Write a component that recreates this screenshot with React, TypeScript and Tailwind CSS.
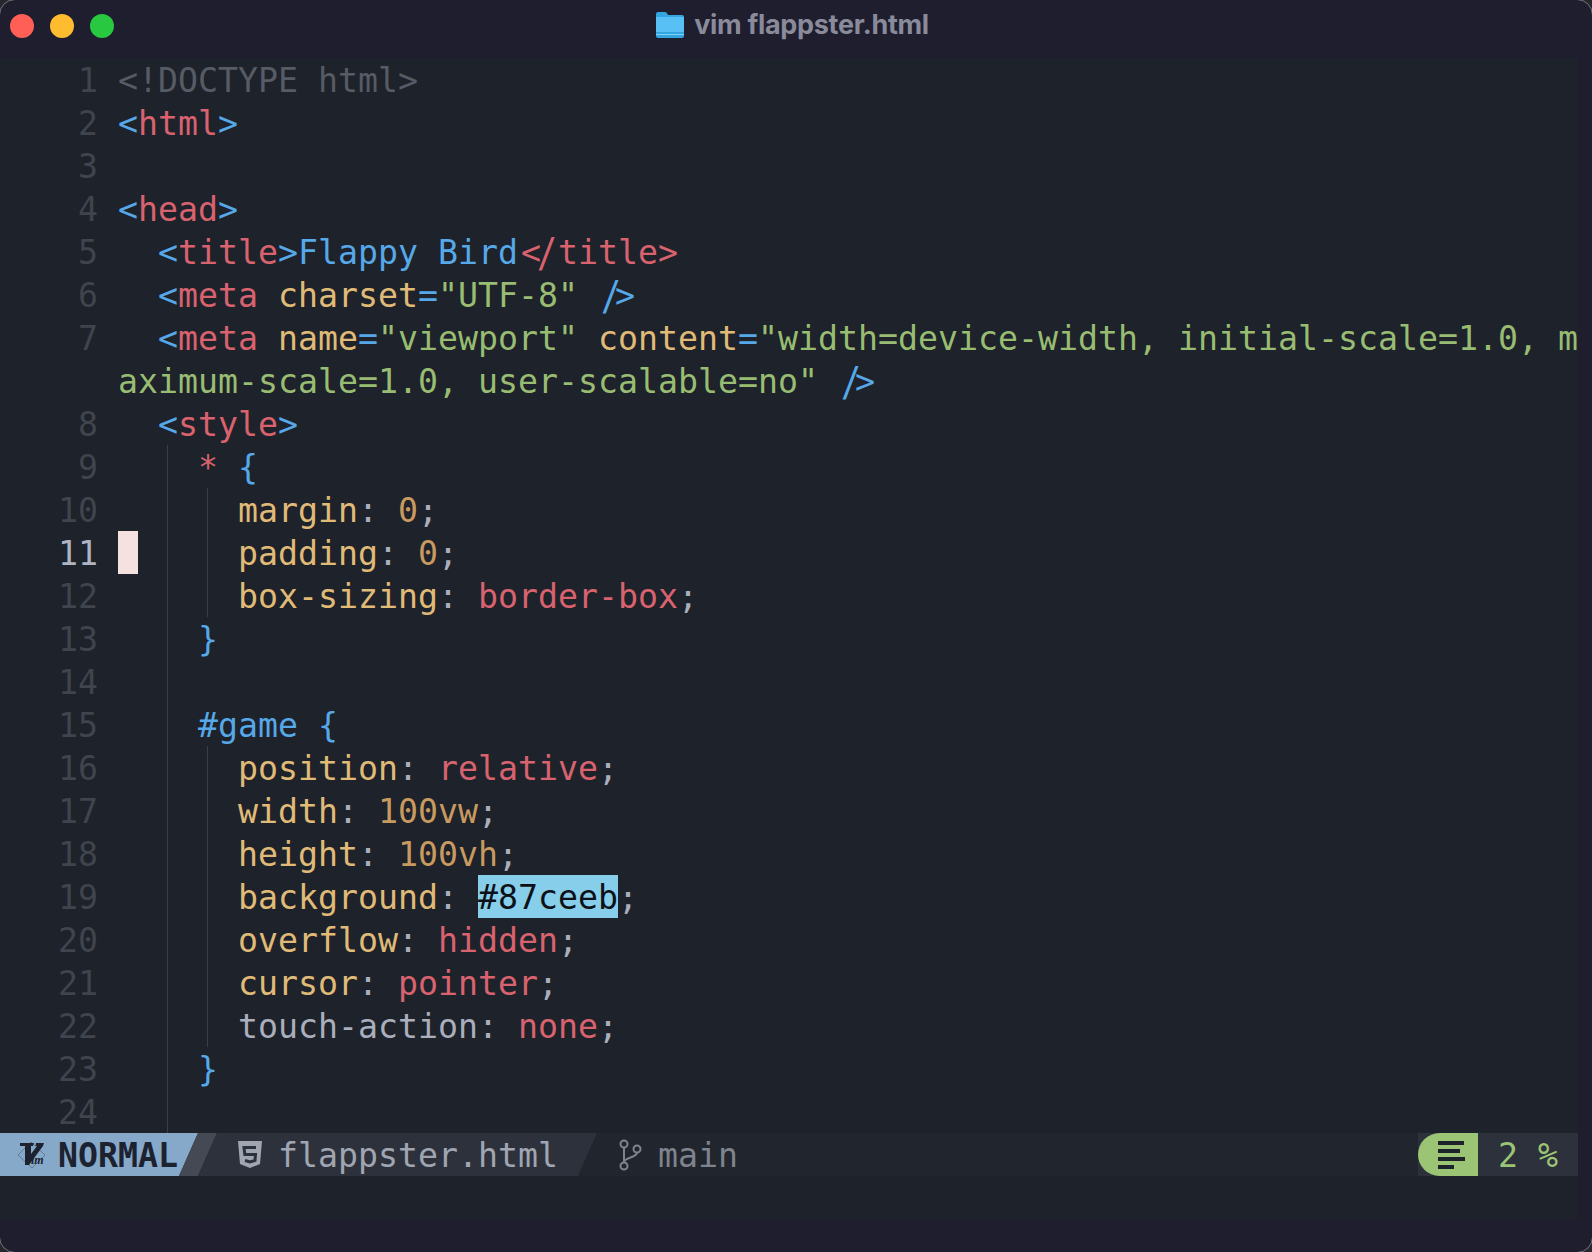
import React from "react";

const B = "text-[#56a8e8]";
const R = "text-[#d9626f]";
const G = "text-[#98bd72]";
const Y = "text-[#e0bb78]";
const O = "text-[#c99a60]";
const P = "text-[#a9afbc]";
const D = "text-[#565b65]";

type Tok = [string, string, string?];
type Row = { n?: number; t: Tok[]; g?: number[] };

const prop = (name: string, val: string, cls: string, nameCls = Y): Tok[] => [
  ["      ", P],
  [name, nameCls],
  [": ", P],
  [val, cls],
  [";", P],
];
const ltr = "inline-block translate-x-[3px]";
const slashL = "inline-block -translate-x-[1px] scale-y-125";
const slashR = "inline-block translate-x-[3px] scale-y-125";
const gtL = "inline-block -translate-x-[3px]";

const rows: Row[] = [
  { n: 1, t: [["<!DOCTYPE html>", D]] },
  { n: 2, t: [["<", B], ["html", R], [">", B]] },
  { n: 3, t: [] },
  { n: 4, t: [["<", B], ["head", R], [">", B]] },
  { n: 5, t: [["  ", P], ["<", B], ["title", R], [">", B], ["Flappy Bird", B], ["<", R, ltr], ["/", R, slashL], ["title", R], [">", R]] },
  { n: 6, t: [["  ", P], ["<", B], ["meta ", R], ["charset", Y], ["=", B], ['"UTF-8" ', G], ["/", B, slashR], [">", B, gtL]] },
  { n: 7, t: [["  ", P], ["<", B], ["meta ", R], ["name", Y], ["=", B], ['"viewport" ', G], ["content", Y], ["=", B], ['"width=device-width, initial-scale=1.0, m', G]] },
  { t: [['aximum-scale=1.0, user-scalable=no" ', G], ["/", B, slashR], [">", B, gtL]] },
  { n: 8, t: [["  ", P], ["<", B], ["style", R], [">", B]] },
  { n: 9, t: [["    ", P], ["* ", R], ["{", B]], g: [168] },
  { n: 10, t: [...prop("margin", "0", O)], g: [168, 208] },
  { n: 11, t: [...prop("padding", "0", O)], g: [168, 208] },
  { n: 12, t: [...prop("box-sizing", "border-box", R)], g: [168, 208] },
  { n: 13, t: [["    ", P], ["}", B]], g: [168] },
  { n: 14, t: [], g: [168] },
  { n: 15, t: [["    ", P], ["#game {", B]], g: [168] },
  { n: 16, t: [...prop("position", "relative", R)], g: [168, 208] },
  { n: 17, t: [...prop("width", "100vw", O)], g: [168, 208] },
  { n: 18, t: [...prop("height", "100vh", O)], g: [168, 208] },
  { n: 19, t: [["      ", P], ["background", Y], [": ", P], ["#87ceeb", "inline-block h-[43px] align-top bg-[#87ceeb] text-[#0d1117]"], [";", P]], g: [168, 208] },
  { n: 20, t: [...prop("overflow", "hidden", R)], g: [168, 208] },
  { n: 21, t: [...prop("cursor", "pointer", R)], g: [168, 208] },
  { n: 22, t: [...prop("touch-action", "none", R, P)], g: [168, 208] },
  { n: 23, t: [["    ", P], ["}", B]], g: [168] },
  { n: 24, t: [], g: [168] },
];

const mono = "font-['DejaVu_Sans_Mono',monospace] text-[33.22px] leading-[45px] whitespace-pre [font-variant-ligatures:none]";

function CodeRow({ row }: { row: Row }) {
  const current = row.n === 11;
  return (
    <div className="relative flex h-[43px]">
      <div className={`w-[98px] text-right ${current ? "text-[#aeb4c2]" : "text-[#3f444e]"}`}>{row.n ?? ""}</div>
      <div className="ml-[20px] flex-1">
        {current && <span className="absolute left-[118px] top-0 h-[43px] w-[20px] bg-[#f5e1df]" />}
        {row.t.map((tok, i) => (
          <span key={i} className={`${tok[1]} ${tok[2] ?? ""}`}>
            {tok[0]}
          </span>
        ))}
      </div>
      {row.g?.includes(168) && <span className="absolute left-[167px] top-0 h-[43px] w-px bg-[#3a3e47]" />}
      {row.g?.includes(208) && <span className="absolute left-[207px] top-0 h-[43px] w-px bg-[#3a3e47]" />}
    </div>
  );
}

function VimLogo() {
  return (
    <svg width="30" height="28" viewBox="0 0 30 28" className="shrink-0">
      <path d="M1 14 L14 1 L28 14 L15 27 Z" fill="none" stroke="#4a5a70" strokeWidth="0.6" />
      <path d="M3 2 H17 L16 5 H14 L14 13 L20 5 H18.5 L19 2 H27 L26 5 L12 24 H8 L8 5 H3 Z" fill="#1c2230" />
      <text x="14" y="23" fontFamily="'Liberation Serif', serif" fontStyle="italic" fontWeight="700" fontSize="12" fill="#1c2230">
        im
      </text>
    </svg>
  );
}

function Folder() {
  return (
    <svg width="28" height="26" viewBox="0 0 28 26" className="shrink-0">
      <path d="M0 2 Q0 0 2 0 H9 Q10.5 0 11.5 2 L12 3 H26 Q28 3 28 5 V24 Q28 26 26 26 H2 Q0 26 0 24 Z" fill="#35a5e2" />
      <rect x="0" y="5" width="28" height="15" fill="#58c0f5" />
      <rect x="0" y="22" width="28" height="1" fill="#7fd2f8" />
    </svg>
  );
}

function Html5() {
  return (
    <svg width="26" height="29" viewBox="0 0 26 29" className="shrink-0">
      <path d="M1 1 H25 L23 24 L13 28 L3 24 Z" fill="#a0a5b2" />
      <path d="M19 7.5 H7 L7.8 14.5 H18.5 L18 20.5 L13 22 L8 20.5" fill="none" stroke="#2d313b" strokeWidth="3" />
    </svg>
  );
}

function Branch() {
  return (
    <svg width="26" height="32" viewBox="0 0 26 32" className="shrink-0" fill="none" stroke="#7f838d" strokeWidth="2">
      <circle cx="7" cy="5" r="3.5" />
      <circle cx="7" cy="27" r="3.5" />
      <circle cx="20" cy="10" r="3.5" />
      <path d="M7 8.5 V23.5" />
      <path d="M20 13.5 C20 19 8 18 7 23" />
    </svg>
  );
}

export default function App() {
  return (
    <div className="h-[1252px] w-[1592px] overflow-hidden bg-[#26262c]">
      <div className="-m-px flex h-[1254px] w-[1594px] flex-col overflow-hidden rounded-[16px] border border-[#74747c] bg-[#1e1e2e]">
        <header className="relative flex h-[58px] shrink-0 items-center justify-center">
          <div className="absolute left-[10px] top-[14px] flex gap-[16px]">
            <span className="h-[24px] w-[24px] rounded-full bg-[#ff5f57]" />
            <span className="h-[24px] w-[24px] rounded-full bg-[#febc2e]" />
            <span className="h-[24px] w-[24px] rounded-full bg-[#28c840]" />
          </div>
          <div className="mb-[8px] mr-[7px] flex items-center gap-[10px]">
            <Folder />
            <span className="font-['Inter',sans-serif] text-[27px] font-bold tracking-[-0.3px] text-[#898b9b]">vim flappster.html</span>
          </div>
        </header>
        <main className={`mr-[14px] bg-[#1e222a] ${mono}`}>
          {rows.map((r, i) => (
            <CodeRow key={i} row={r} />
          ))}
          <div className="flex h-[43px] bg-[#21252d]">
            <div className="flex w-[198px] items-center pl-[17px] [clip-path:polygon(0_0,100%_0,179px_100%,0_100%)] bg-[#87a9c9]">
              <VimLogo />
              <span className="ml-[11px] mt-[2px] font-bold text-[#1c2230]">NORMAL</span>
            </div>
            <div className="-ml-[19px] w-[38px] bg-[#444953] [clip-path:polygon(19px_0,100%_0,19px_100%,0_100%)]" />
            <div className="-ml-[19px] flex w-[399px] items-center pl-[39px] bg-[#2d313b] [clip-path:polygon(19px_0,100%_0,380px_100%,0_100%)]">
              <Html5 />
              <span className="ml-[15px] mt-[2px] text-[#a0a5b2]">flappster.html</span>
            </div>
            <div className="ml-[20px] flex items-center">
              <Branch />
              <span className="ml-[15px] mt-[2px] text-[#7f838d]">main</span>
            </div>
            <div className="ml-auto flex bg-[#2d313b]">
              <div className="flex w-[60px] flex-col items-start justify-center gap-[4px] rounded-l-[22px] bg-[#9bc475] pl-[20px]">
                <span className="h-[4px] w-[26px] bg-[#1e222a]" />
                <span className="h-[4px] w-[22px] bg-[#1e222a]" />
                <span className="h-[4px] w-[27px] bg-[#1e222a]" />
                <span className="h-[4px] w-[16px] bg-[#1e222a]" />
              </div>
              <div className="w-[100px] pl-[20px] text-[#9bc475]">2 %</div>
            </div>
          </div>
          <div className="h-[43px]" />
        </main>
      </div>
    </div>
  );
}
